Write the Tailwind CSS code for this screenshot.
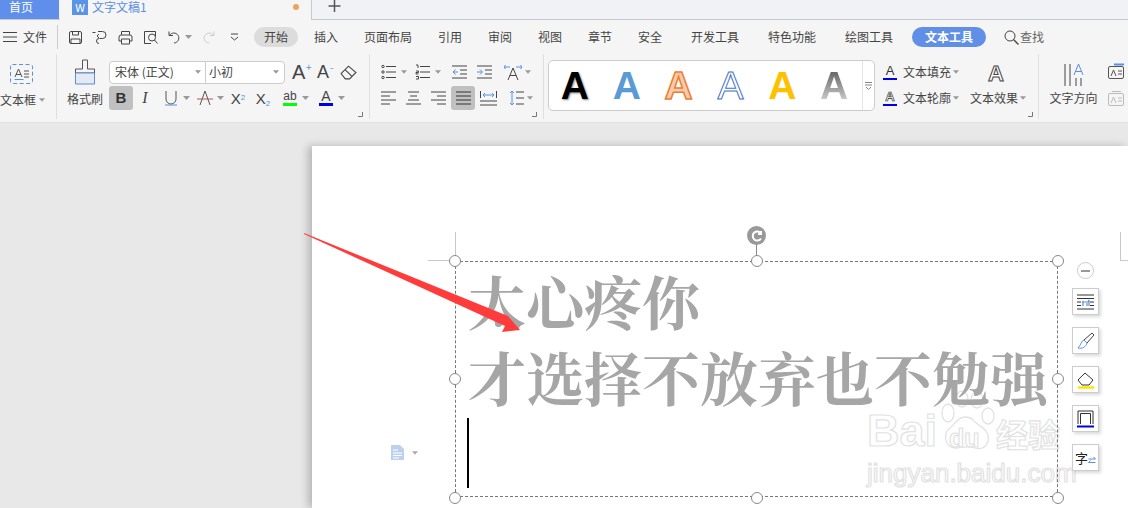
<!DOCTYPE html>
<html lang="zh">
<head>
<meta charset="UTF-8">
<title>文字文稿1</title>
<script src="https://cdn.jsdelivr.net/npm/@tailwindcss/browser@4"></script>
</head>
<body class="w-[1128px] h-[508px] overflow-hidden bg-[#e8e8e8] font-['Noto_Sans_CJK_SC',sans-serif] text-[12px] text-[#444]">

<!-- tabs -->
<div class="flex h-[20px] bg-[#f1f2f6] border-b border-[#c8c9d0]">
  <div class="w-[59px] h-[19px] bg-[#5f8fea] text-white leading-[13px] pl-[9px]">首页</div>
  <div class="ml-[1px] w-[252px] h-[20px] bg-[#f5f5f5] border-r border-[#c8c9d0] flex items-start pl-[12px] -mb-px">
    <div class="w-[16px] h-[15px] bg-[#5b93e6] text-white text-[11px] leading-[14px] text-center">W</div>
    <span class="ml-[4px] w-[54px] text-[#5b8fe0] leading-[13px] whitespace-nowrap">文字文稿1</span>
    <span class="ml-[147px] mt-[4px] w-[6px] h-[6px] rounded-full bg-[#eda35c]"></span>
  </div>
  <svg class="ml-[16px] w-[13px] h-[13px]" viewBox="0 0 13 13"><path d="M6.500 0v12M0.500 6h12" stroke="#555" stroke-width="1.500"/></svg>
</div>

<!-- menu row -->
<div class="flex items-center h-[34px] bg-[#f5f5f5]">
  <svg class="ml-[3px] w-[15px] h-[12px]" viewBox="0 0 15 12"><path d="M0 1.500h14M0 6h14M0 10.500h14" stroke="#444"/></svg>
  <span class="ml-[5px] w-[26px]">文件</span>
  <span class="ml-[8px] w-px h-[24px] bg-[#ccc]"></span>
  <!-- save -->
  <svg class="ml-[10px] w-[15px] h-[15px]" viewBox="0 0 15 15" fill="none" stroke="#444"><path d="M1.500 3a1.500 1.500 0 0 1 1.500-1.500h9a1.500 1.500 0 0 1 1.500 1.500v9a1.500 1.500 0 0 1-1.500 1.500h-9a1.500 1.500 0 0 1-1.500-1.500zM4.500 1.500v3.500h6v-3.500M3 13.500v-4.500h9v4.500"/></svg>
  <svg class="ml-[9px] w-[15px] h-[15px]" viewBox="0 0 15 15" fill="none" stroke="#444"><path d="M0.500 2.500h3M6 1.500h4.500a3.500 3.500 0 0 1 0 7h-3M7 8.500a2.500 2.500 0 1 0 0 5M7 4l-2 2 2 2"/></svg>
  <svg class="ml-[11px] w-[15px] h-[15px]" viewBox="0 0 15 15" fill="none" stroke="#444"><path d="M3.500 5v-3.500h8v3.500M3.500 11h-2.500v-4a2 2 0 0 1 2-2h9a2 2 0 0 1 2 2v4h-2.500M3.500 9h8v5h-8z"/></svg>
  <svg class="ml-[10px] w-[16px] h-[15px]" viewBox="0 0 16 15" fill="none" stroke="#444"><path d="M8 13.500h-6.500v-12h11v5"/><circle cx="9" cy="7.500" r="3.500"/><path d="M11.500 10l3 3.500"/></svg>
  <svg class="ml-[9px] w-[14px] h-[14px]" viewBox="0 0 14 14" fill="none" stroke="#444"><path d="M1 1.500v4h4M1.500 5.500a5 5 0 1 1 4.500 7.500"/></svg>
  <svg class="ml-[3px] w-[7px] h-[4px]" viewBox="0 0 7 4"><path d="M0 0h7l-3.500 4z" fill="#999"/></svg>
  <svg class="ml-[9px] w-[14px] h-[14px]" viewBox="0 0 14 14" fill="none" stroke="#ccc"><path d="M13 1.500v4h-4M12.500 5.500a5 5 0 1 0-4.500 7.500"/></svg>
  <svg class="ml-[15px] w-[9px] h-[8px]" viewBox="0 0 9 8" fill="none" stroke="#444"><path d="M1 1h7M1 4l3.500 3 3.500-3"/></svg>
  <span class="ml-[15px] w-[44px] h-[20px] rounded-full bg-[#dcdcdc] text-center leading-[20px]">开始</span>
  <span class="w-[56px] text-center">插入</span>
  <span class="w-[68px] text-center">页面布局</span>
  <span class="w-[56px] text-center">引用</span>
  <span class="w-[44px] text-center">审阅</span>
  <span class="w-[56px] text-center">视图</span>
  <span class="w-[44px] text-center">章节</span>
  <span class="w-[56px] text-center">安全</span>
  <span class="w-[74px] text-center">开发工具</span>
  <span class="w-[80px] text-center">特色功能</span>
  <span class="w-[74px] text-center">绘图工具</span>
  <span class="ml-[6px] w-[74px] h-[20px] rounded-full bg-[#5f8fe6] text-white font-bold text-center leading-[20px]">文本工具</span>
  <svg class="ml-[18px] w-[15px] h-[15px]" viewBox="0 0 15 15" fill="none" stroke="#444"><circle cx="6" cy="6" r="5"/><path d="M9.500 9.500l5 5" stroke-width="1.300"/></svg>
  <span class="ml-[1px] text-[#666]">查找</span>
</div>

<!-- ribbon -->
<div class="flex h-[69px] bg-[#f5f5f5] border-b border-[#e0e0e0]">

  <!-- text box -->
  <div class="w-[57px] h-[65px] border-r border-[#e0e0e0] relative">
    <svg class="ml-[10px] mt-[10px] w-[24px] h-[21px]" viewBox="0 0 24 21" fill="none"><rect x="0.500" y="0.500" width="22" height="19" rx="2" stroke="#5b8fe0" stroke-dasharray="4 2.500"/><path d="M5 13l3.500-8 3.500 8M6 10.500h5M14 7h5M14 10h5M14 13h5" stroke="#555"/><path d="M4.500 15.500h9" stroke="#5b8fe0"/></svg>
    <div class="flex items-center mt-[6px] w-[60px]"><span class="w-[36px]">文本框</span><svg class="ml-[3px] w-[6px] h-[4px]" viewBox="0 0 7 4"><path d="M0 0h7l-3.500 4z" fill="#999"/></svg></div>
  </div>

  <!-- format painter -->
  <div class="w-[52px] pl-[4px] flex flex-col items-center">
    <svg class="mt-[5px] w-[22px] h-[26px]" viewBox="0 0 22 26" fill="none"><path d="M8.500 1h5v9h7v4h-19v-4h7z" stroke="#555"/><path d="M1.500 14h19v11h-19z" fill="#e4e9f2" stroke="#5b8fe0"/></svg>
    <span class="mt-[5px] whitespace-nowrap">格式刷</span>
  </div>

  <!-- font -->
  <div class="w-[261px] h-[65px] border-r border-[#e0e0e0] relative">
    <div class="flex items-center mt-[6px] h-[24px]">
      <div class="flex w-[176px] h-[23px] bg-white border border-[#ccc] rounded-[4px] items-center">
        <span class="w-[85px] pl-[5px]">宋体 (正文)</span>
        <svg class="w-[6px] h-[4px]" viewBox="0 0 7 4"><path d="M0 0h7l-3.500 4z" fill="#999"/></svg>
        <span class="ml-[4px] w-px h-[21px] bg-[#ccc]"></span>
        <span class="w-[67px] pl-[3px]">小初</span>
        <svg class="w-[6px] h-[4px]" viewBox="0 0 7 4"><path d="M0 0h7l-3.500 4z" fill="#999"/></svg>
      </div>
      <span class="ml-[7px] w-[14px] text-[20px] font-['Liberation_Sans',sans-serif] leading-none">A</span>
      <span class="mt-[-10px] w-[6px] text-[10px] text-[#5b8fe0] leading-none">+</span>
      <span class="ml-[5px] w-[13px] text-[18px] font-['Liberation_Sans',sans-serif] leading-none">A</span>
      <span class="mt-[-10px] w-[6px] text-[10px] text-[#5b8fe0] leading-none">-</span>
      <svg class="ml-[4px] w-[17px] h-[15px]" viewBox="0 0 16 14" fill="none" stroke="#444"><path d="M1 8l7-7 7 6-6 6h-4zM5 4.500l6 6"/></svg>
    </div>
    <div class="flex items-center mt-[2px] h-[24px] font-['Liberation_Sans',sans-serif]">
      <span class="w-[24px] h-[24px] bg-[#c0c0c0] rounded-[3px] text-center text-[15px] font-bold leading-[24px] text-[#333]">B</span>
      <span class="w-[24px] text-center text-[16px] italic font-['Liberation_Serif',serif]">I</span>
      <svg class="ml-[2px] w-[24px] h-[16px]" viewBox="0 0 24 16" fill="none"><path d="M7 1v8a5 5 0 0 0 10 0v-8" stroke="#555"/><path d="M6 15h12" stroke="#5b8fe0"/></svg>
      <svg class="w-[7px] h-[4px] mr-[3px]" viewBox="0 0 7 4"><path d="M0 0h7l-3.500 4z" fill="#999"/></svg>
      <svg class="w-[24px] h-[16px]" viewBox="0 0 24 16" fill="none"><path d="M7 15l5-14 5 14" stroke="#555"/><path d="M4 9h16" stroke="#c0504d"/></svg>
      <svg class="w-[7px] h-[4px] mr-[2px]" viewBox="0 0 7 4"><path d="M0 0h7l-3.500 4z" fill="#999"/></svg>
      <div class="w-[24px] text-center text-[15px] leading-none">X<sup class="text-[8px] text-[#5b8fe0]">2</sup></div>
      <div class="ml-[1px] w-[24px] text-center text-[15px] leading-none">X<sub class="text-[8px] text-[#5b8fe0]">2</sub></div>
      <div class="ml-[3px] w-[24px] flex flex-col items-center"><span class="text-[12px] leading-[13px]">ab</span><span class="w-[14px] h-[3px] bg-[#00ff00]"></span></div>
      <svg class="w-[7px] h-[4px] mr-[2px]" viewBox="0 0 7 4"><path d="M0 0h7l-3.500 4z" fill="#999"/></svg>
      <div class="ml-[3px] w-[24px] flex flex-col items-center"><span class="text-[14px] leading-[13px]">A</span><span class="w-[14px] h-[3px] bg-[#0000e6]"></span></div>
      <svg class="w-[7px] h-[4px]" viewBox="0 0 7 4"><path d="M0 0h7l-3.500 4z" fill="#999"/></svg>
    </div>
    <svg class="absolute right-[6px] bottom-[2px] w-[5px] h-[5px]" viewBox="0 0 5 5"><path d="M4.500 0v4.500H0" fill="none" stroke="#777"/></svg>
  </div>

  <!-- paragraph -->
  <div class="w-[174px] h-[65px] border-r border-[#e0e0e0] relative pl-[11px]">
    <div class="flex items-center mt-[8px] h-[20px]">
      <svg class="w-[16px] h-[16px]" viewBox="0 0 16 16" fill="none" stroke="#444"><path d="M5 2.500h10M5 8h10M5 13.500h10"/><circle cx="2" cy="2.500" r="1.200"/><circle cx="2" cy="8" r="1.200"/><circle cx="2" cy="13.500" r="1.200"/></svg>
      <svg class="ml-[4px] w-[6px] h-[4px]" viewBox="0 0 7 4"><path d="M0 0h7l-3.500 4z" fill="#999"/></svg>
      <svg class="ml-[8px] w-[16px] h-[16px]" viewBox="0 0 16 16" fill="none" stroke="#444"><path d="M5 2.500h10M5 8h10M5 13.500h10M1 1h2v3M1 7h2.500v1.500h-2.500v1.500h2.500M1 12.500h2.500v2.500h-2.500"/></svg>
      <svg class="ml-[4px] w-[6px] h-[4px]" viewBox="0 0 7 4"><path d="M0 0h7l-3.500 4z" fill="#999"/></svg>
      <svg class="ml-[11px] w-[15px] h-[14px]" viewBox="0 0 15 14" fill="none"><path d="M0 1h15M8 5h7M8 9h7M0 13h15" stroke="#444"/><path d="M6 7h-5M3.500 4.500l-2.500 2.500 2.500 2.500" stroke="#5b8fe0"/></svg>
      <svg class="ml-[10px] w-[15px] h-[14px]" viewBox="0 0 15 14" fill="none"><path d="M0 1h15M8 5h7M8 9h7M0 13h15" stroke="#444"/><path d="M0 7h5M3 4.500l2.500 2.500-2.500 2.500" stroke="#5b8fe0"/></svg>
      <svg class="ml-[12px] w-[18px] h-[16px]" viewBox="0 0 18 16" fill="none"><path d="M0 3h6M1.500 1l-1.500 2 1.500 2M12 3h6M16.500 1l1.500 2-1.500 2" stroke="#5b8fe0"/><path d="M4 16l5-12 5 12M6 11.500h6" stroke="#444"/></svg>
      <svg class="ml-[3px] w-[6px] h-[4px]" viewBox="0 0 7 4"><path d="M0 0h7l-3.500 4z" fill="#999"/></svg>
    </div>
    <div class="flex items-center mt-[4px] h-[24px]">
      <svg class="w-[15px] h-[14px]" viewBox="0 0 15 14" stroke="#444"><path d="M0 1h15M0 5h9M0 9h15M0 13h9"/></svg>
      <svg class="ml-[10px] w-[15px] h-[14px]" viewBox="0 0 15 14" stroke="#444"><path d="M2 1h11M4 5h7M2 9h11M0 13h15"/></svg>
      <svg class="ml-[10px] w-[15px] h-[14px]" viewBox="0 0 15 14" stroke="#444"><path d="M0 1h15M6 5h9M0 9h15M6 13h9"/></svg>
      <div class="ml-[5px] w-[24px] h-[24px] bg-[#c0c0c0] rounded-[3px] flex items-center justify-center"><svg class="w-[15px] h-[14px]" viewBox="0 0 15 14" stroke="#333"><path d="M0 1h15M0 5h15M0 9h15M0 13h15"/></svg></div>
      <svg class="ml-[5px] w-[17px] h-[15px]" viewBox="0 0 17 15" fill="none"><path d="M0 10h17M0 14h17M0.500 0v7M16.500 0v7" stroke="#444"/><path d="M3 4h11M5 2l-2 2 2 2M12 2l2 2-2 2" stroke="#5b8fe0"/></svg>
      <svg class="ml-[12px] w-[15px] h-[16px]" viewBox="0 0 15 16" fill="none"><path d="M3 1v14M1 3l2-2 2 2M1 13l2 2 2-2" stroke="#5b8fe0"/><path d="M7 2h8M7 8h8M7 14h8" stroke="#444"/></svg>
      <svg class="ml-[3px] w-[6px] h-[4px]" viewBox="0 0 7 4"><path d="M0 0h7l-3.500 4z" fill="#999"/></svg>
    </div>
    <svg class="absolute right-[6px] bottom-[2px] w-[5px] h-[5px]" viewBox="0 0 5 5"><path d="M4.500 0v4.500H0" fill="none" stroke="#777"/></svg>
  </div>

  <!-- text styles -->
  <div class="ml-[4px] mt-[6px] w-[327px] h-[51px] bg-white border border-[#ccc] rounded-[5px] flex items-center font-['Liberation_Sans',sans-serif] text-[39px] font-bold leading-none">
    <span class="w-[52px] text-center text-black [text-shadow:1px_1px_2px_rgba(0,0,0,0.5)]">A</span>
    <span class="w-[52px] text-center text-[#5b9bd5]">A</span>
    <span class="w-[52px] text-center text-[#f8cbad] [-webkit-text-stroke:1.500px_#ed7d31]">A</span>
    <span class="w-[52px] text-center text-white font-normal [-webkit-text-stroke:1px_#4472c4]">A</span>
    <span class="w-[52px] text-center text-[#ffc000]">A</span>
    <span class="w-[52px] text-center bg-linear-to-b from-[#555] to-[#ddd] bg-clip-text text-transparent">A</span>
    <div class="ml-[2px] w-[12px] h-full border-l border-[#e5e5e5] flex items-center justify-center">
      <svg class="w-[7px] h-[8px]" viewBox="0 0 7 8" fill="none" stroke="#888"><path d="M0 0.500h7M0 3h7M1 5l2.500 2.500 2.500-2.500"/></svg>
    </div>
  </div>

  <!-- text fill / effects -->
  <div class="ml-[5px] w-[159px] h-[65px] border-r border-[#e0e0e0] relative flex">
    <div class="w-[88px] ml-[3px]">
      <div class="flex items-center h-[24px] mt-[6px]">
        <div class="w-[14px] flex flex-col items-center"><span class="font-['Liberation_Sans',sans-serif] text-[13px] leading-[12px] text-[#333]">A</span><span class="w-[14px] h-[2px] bg-[#0000e6] mt-[1px]"></span></div>
        <span class="ml-[6px]">文本填充</span>
        <svg class="ml-[2px] w-[6px] h-[4px]" viewBox="0 0 7 4"><path d="M0 0h7l-3.500 4z" fill="#999"/></svg>
      </div>
      <div class="flex items-center h-[24px] mt-[2px]">
        <div class="w-[14px] flex flex-col items-center"><span class="font-['Liberation_Sans',sans-serif] text-[13px] font-bold leading-[12px] text-white [-webkit-text-stroke:0.700px_#333]">A</span><span class="w-[14px] h-[2px] bg-[#0000e6] mt-[1px]"></span></div>
        <span class="ml-[6px]">文本轮廓</span>
        <svg class="ml-[2px] w-[6px] h-[4px]" viewBox="0 0 7 4"><path d="M0 0h7l-3.500 4z" fill="#999"/></svg>
      </div>
    </div>
    <div class="w-[60px] flex flex-col items-start">
      <span class="ml-[17px] mt-[9px] h-[24px] font-['Liberation_Sans',sans-serif] text-[22px] font-bold leading-[22px] text-white [-webkit-text-stroke:1px_#444]">A</span>
      <div class="flex items-center mt-[2px] ml-[-1px] w-[60px]">
        <span class="whitespace-nowrap">文本效果</span>
        <svg class="ml-[2px] w-[6px] h-[4px]" viewBox="0 0 7 4"><path d="M0 0h7l-3.500 4z" fill="#999"/></svg>
      </div>
    </div>
    <svg class="absolute right-[5px] bottom-[2px] w-[5px] h-[5px]" viewBox="0 0 5 5"><path d="M4.500 0v4.500H0" fill="none" stroke="#777"/></svg>
  </div>

  <!-- text direction -->
  <div class="w-[69px] flex flex-col items-center">
    <svg class="mt-[9px] w-[20px] h-[24px]" viewBox="0 0 20 24" fill="none"><path d="M1 1v22M6 1v22M12 15v8M17 15v8" stroke="#444"/><path d="M10 12l4.500-11 4.500 11M11.500 8.500h6" stroke="#5b8fe0"/></svg>
    <span class="mt-[2px]">文字方向</span>
  </div>
  <div class="flex flex-col">
    <svg class="mt-[9px] w-[17px] h-[16px]" viewBox="0 0 17 16" fill="none"><rect x="0.500" y="3.500" width="15" height="12" rx="1.500" stroke="#555"/><path d="M3 13l2.500-6 2.500 6M10 8h4M10 11h4" stroke="#555"/><path d="M6 1.500h10" stroke="#5b8fe0" stroke-width="2"/></svg>
    <svg class="mt-[11px] w-[17px] h-[16px]" viewBox="0 0 17 16" fill="none" stroke="#bbb"><rect x="0.500" y="3.500" width="15" height="12" rx="1.500"/><path d="M3 13l2.500-6 2.500 6M10 8h4M10 11h4M4 1.500h9"/></svg>
  </div>
</div>

<!-- workspace -->
<div class="pl-[312px] pt-[23px]">
  <div class="relative w-[816px] h-[362px] bg-white shadow-[-4px_0_8px_rgba(0,0,0,0.22)]">

    <!-- margin marks -->
    <span class="absolute left-[143px] top-[86px] w-px h-[29px] bg-[#c8c8c8]"></span>
    <span class="absolute left-[116px] top-[114px] w-[27px] h-px bg-[#c8c8c8]"></span>
    <span class="absolute left-[808px] top-[86px] w-px h-[29px] bg-[#c8c8c8]"></span>
    <span class="absolute left-[808px] top-[114px] w-[8px] h-px bg-[#c8c8c8]"></span>

    <!-- doc marker -->
    <div class="absolute left-[79px] top-[299px] flex items-center">
      <svg class="w-[13px] h-[15px]" viewBox="0 0 13 15"><path d="M0 0h9l4 4v11h-13z" fill="#bdd0ee"/><path d="M2 5h5M2 8h9M2 10.500h9M2 13h6" stroke="#fff"/></svg>
      <svg class="ml-[8px] w-[6px] h-[4px]" viewBox="0 0 7 4"><path d="M0 0h7l-3.500 4z" fill="#aaa"/></svg>
    </div>

    <!-- watermark -->
    <div class="absolute left-[555px] top-[244px] w-[206px] text-transparent [-webkit-text-stroke:1.200px_#e2e2e2]">
      <div class="flex items-end h-[64px] font-['Liberation_Sans',sans-serif] font-bold text-[45px] leading-[46px]">
        <span class="w-[70px]">Bai</span>
        <div class="relative w-[60px] h-[64px] -ml-[2px]">
          <svg class="w-[60px] h-[64px]" viewBox="0 0 60 64" fill="none" stroke="#e2e2e2" stroke-width="1.300"><ellipse cx="13" cy="23" rx="6" ry="9"/><ellipse cx="27" cy="9" rx="6" ry="8"/><ellipse cx="42" cy="10" rx="6" ry="8"/><ellipse cx="53" cy="26" rx="6" ry="8"/><path d="M30 27c-7 0-10 7-15 11-7 5-6 19 5 20 6 0 14-3 20 0 10 3 17-7 11-17-4-5-10-7-12-10-2-3-5-4-9-4z"/></svg>
          <span class="absolute left-[14px] top-[36px] text-[25px] leading-[24px]">du</span>
        </div>
        <span class="ml-[1px] text-[32px] leading-[42px] whitespace-nowrap font-['Noto_Sans_CJK_SC',sans-serif]">经验</span>
      </div>
      <div class="mt-[6px] font-['Liberation_Sans',sans-serif] text-[26px] leading-[26px] whitespace-nowrap">jingyan.baidu.com</div>
    </div>

    <!-- text box -->
    <div class="absolute left-[143px] top-[115px] w-[603px] h-[236px] border border-dashed border-[#777]">
      <div class="pl-[12px] font-['Noto_Serif_CJK_SC','Noto_Sans_CJK_SC',serif] font-bold text-[58px] leading-[76px] text-[#a6a6a6] whitespace-nowrap">
        <p>太心疼你</p>
        <p>才选择不放弃也不勉强</p>
      </div>
      <span class="absolute left-[11px] top-[156px] w-[2px] h-[70px] bg-black"></span>

      <!-- handles -->
      <span class="absolute left-[-7px] top-[-7px] w-[12px] h-[12px] rounded-full bg-white border border-[#888]"></span>
      <span class="absolute left-[295px] top-[-7px] w-[12px] h-[12px] rounded-full bg-white border border-[#888]"></span>
      <span class="absolute left-[596px] top-[-7px] w-[12px] h-[12px] rounded-full bg-white border border-[#888]"></span>
      <span class="absolute left-[-7px] top-[111px] w-[12px] h-[12px] rounded-full bg-white border border-[#888]"></span>
      <span class="absolute left-[596px] top-[111px] w-[12px] h-[12px] rounded-full bg-white border border-[#888]"></span>
      <span class="absolute left-[-7px] top-[230px] w-[12px] h-[12px] rounded-full bg-white border border-[#888]"></span>
      <span class="absolute left-[295px] top-[230px] w-[12px] h-[12px] rounded-full bg-white border border-[#888]"></span>
      <span class="absolute left-[596px] top-[230px] w-[12px] h-[12px] rounded-full bg-white border border-[#888]"></span>

      <!-- rotate -->
      <span class="absolute left-[300px] top-[-20px] w-px h-[13px] bg-[#888]"></span>
      <div class="absolute left-[291px] top-[-36px] w-[19px] h-[19px] rounded-full bg-[#999] flex items-center justify-center">
        <svg class="w-[12px] h-[12px]" viewBox="0 0 12 12" fill="none" stroke="#fff" stroke-width="2"><path d="M10 8.500a4.500 4.500 0 1 1 0-5M10 1v3h-3"/></svg>
      </div>
    </div>

    <!-- float toolbar -->
    <div class="absolute left-[760px] top-[116px] w-[27px] flex flex-col items-center gap-[12px]">
      <div class="w-[17px] h-[17px] mb-[-3px] rounded-full border border-[#ccc] bg-white flex items-center justify-center"><span class="w-[9px] h-[2px] bg-[#999]"></span></div>
      <div class="w-[27px] h-[27px] bg-white border border-[#ccc] shadow-[2px_2px_3px_rgba(0,0,0,0.15)] flex items-center justify-center">
        <svg class="w-[17px] h-[16px]" viewBox="0 0 17 16" fill="none"><path d="M0 1h17M0 4.500h17M0 8h4M13 8h4M0 11.500h4M13 11.500h4M0 15h17" stroke="#333"/><path d="M5 8h6l1-2v6M6 7v5M10 9v3" stroke="#5b8fe0" stroke-width="1.200"/></svg>
      </div>
      <div class="w-[27px] h-[27px] bg-white border border-[#ccc] shadow-[2px_2px_3px_rgba(0,0,0,0.15)] flex items-center justify-center">
        <svg class="w-[18px] h-[18px]" viewBox="0 0 18 18" fill="none"><path d="M7 8l8-7 2 2-7 8z" stroke="#444"/><path d="M7 8c-3 1-3 5-6 8 4 1 8-1 9-5z" stroke="#5b8fe0"/></svg>
      </div>
      <div class="w-[27px] h-[27px] bg-white border border-[#ccc] shadow-[2px_2px_3px_rgba(0,0,0,0.15)] flex items-center justify-center">
        <svg class="w-[18px] h-[18px]" viewBox="0 0 18 18" fill="none"><path d="M1 9l7-7 8 7-4 5h-7z" stroke="#333"/><path d="M1 16.500h16" stroke="#ffe600" stroke-width="2.500"/></svg>
      </div>
      <div class="w-[27px] h-[27px] bg-white border border-[#ccc] shadow-[2px_2px_3px_rgba(0,0,0,0.15)] flex items-center justify-center">
        <svg class="w-[17px] h-[18px]" viewBox="0 0 17 18" fill="none"><path d="M1 14v-13h15v13M3.500 14v-10.500h10v10.500" stroke="#333"/><path d="M0 16.500h17" stroke="#0000e6" stroke-width="2"/></svg>
      </div>
      <div class="w-[27px] h-[27px] bg-white border border-[#ccc] shadow-[2px_2px_3px_rgba(0,0,0,0.15)] flex items-center justify-center text-[13px] text-[#222] leading-none">
        <span>字</span><svg class="w-[8px] h-[7px] mt-[6px]" viewBox="0 0 7 7" fill="none" stroke="#5b8fe0"><path d="M0 2h7M5 0l2 2M7 5.500h-7M2 3.500l-2 2"/></svg>
      </div>
    </div>
  </div>
</div>

<!-- annotation arrow -->
<svg class="absolute left-0 top-0 w-[1128px] h-[508px] pointer-events-none" viewBox="0 0 1128 508">
  <path d="M304 233L508 316L520 330L502 332L505 326L304 234z" fill="#ff3b3b"/>
</svg>
</body>
</html>
